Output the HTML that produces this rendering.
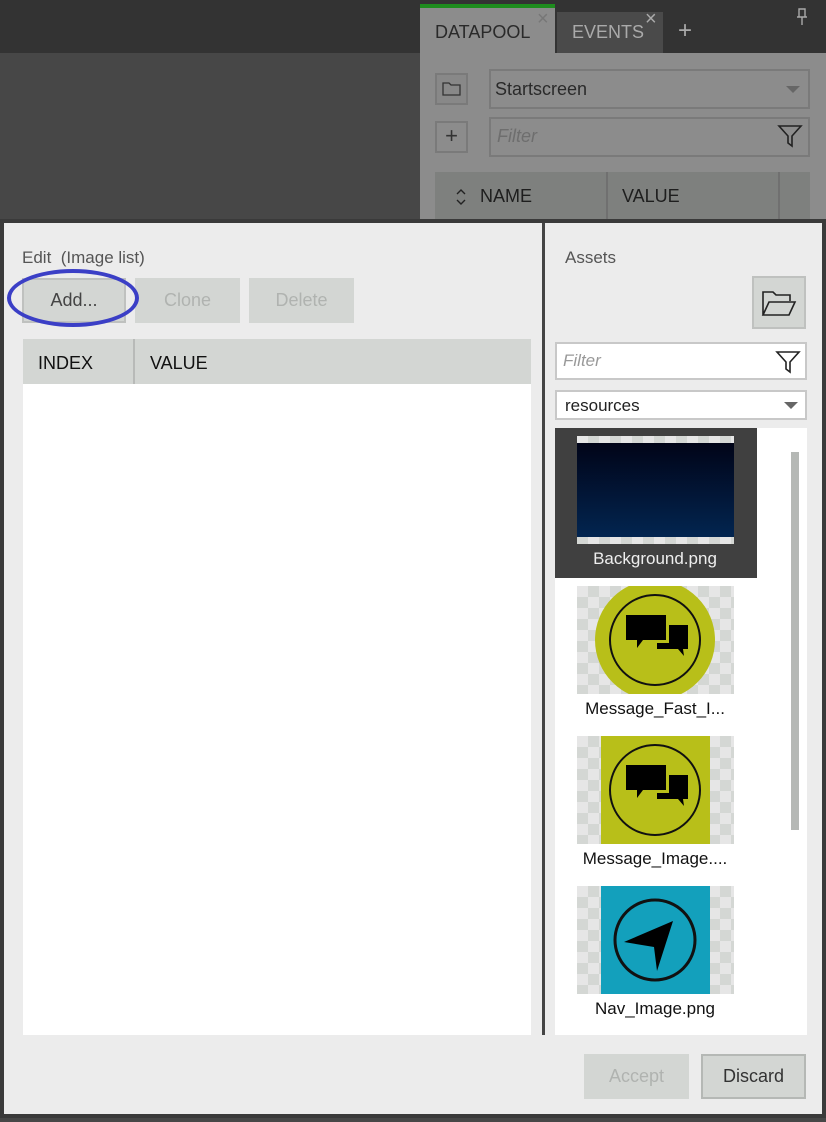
<!DOCTYPE html>
<html><head><meta charset="utf-8"><style>
*{box-sizing:border-box;margin:0;padding:0}
body{width:826px;height:1122px;position:relative;overflow:hidden;background:#474747;font-family:"Liberation Sans",sans-serif;}
.a{position:absolute}
.t{font-size:17px;color:#222}
.btn{position:absolute;background:#d3d6d3;font-size:18px;text-align:center;color:#b0b3b0}
.chk{background-color:#e6e6e6;background-image:linear-gradient(45deg,#d4d7d4 25%,transparent 25%,transparent 75%,#d4d7d4 75%),linear-gradient(45deg,#d4d7d4 25%,transparent 25%,transparent 75%,#d4d7d4 75%);background-size:22px 22px;background-position:0 0,11px 11px}
.lbl{position:absolute;width:200px;text-align:center;font-size:17px;color:#111}
</style></head><body>
<div class="a" style="left:0;top:0;width:826px;height:53px;background:#333"></div>
<div class="a" style="left:420px;top:0;width:406px;height:220px;background:#8c8c8c"></div>
<div class="a" style="left:420px;top:0;width:406px;height:53px;background:#333"></div>
<div class="a" style="left:420px;top:4px;width:135px;height:4px;background:#1e8c1e"></div>
<div class="a" style="left:420px;top:8px;width:135px;height:45px;background:#8c8c8c"></div>
<div class="a" style="left:557px;top:12px;width:106px;height:41px;background:#4a4a4a"></div>
<div class="a" style="left:435px;top:22px;font-size:18px;color:#2a2a2a">DATAPOOL</div>
<div class="a" style="left:537px;top:8px;font-size:20px;color:#777">×</div>
<div class="a" style="left:572px;top:22px;font-size:18px;color:#aaa">EVENTS</div>
<div class="a" style="left:645px;top:8px;font-size:20px;color:#aaa">×</div>
<div class="a" style="left:678px;top:17px;font-size:24px;color:#aaa">+</div>
<svg class="a" style="left:795px;top:8px" width="14" height="18" viewBox="0 0 14 18"><path d="M4 1h6v8H4zM2 9h10M7 9v8" fill="none" stroke="#aaa" stroke-width="1.4"/></svg>
<div class="a" style="left:435px;top:73px;width:33px;height:32px;border:2px solid #7a7a7a;background:#888"></div>
<svg class="a" style="left:441px;top:80px" width="22" height="18" viewBox="0 0 22 18"><path d="M2 3h6l2 2h9v10H2z" fill="none" stroke="#333" stroke-width="1.3"/></svg>
<div class="a" style="left:489px;top:69px;width:321px;height:40px;border:2px solid #7a7a7a"></div>
<div class="a" style="left:495px;top:79px;font-size:18px;color:#2a2a2a">Startscreen</div>
<div class="a" style="left:786px;top:86px;border-left:7px solid transparent;border-right:7px solid transparent;border-top:7px solid #666"></div>
<div class="a" style="left:435px;top:121px;width:33px;height:32px;border:2px solid #7a7a7a;font-size:22px;text-align:center;line-height:26px;color:#333">+</div>
<div class="a" style="left:489px;top:117px;width:321px;height:40px;border:2px solid #7a7a7a"></div>
<div class="a" style="left:497px;top:126px;font-size:18px;font-style:italic;color:#6e6e6e">Filter</div>
<div class="a" style="left:435px;top:172px;width:375px;height:48px;background:#7e807e"></div>
<div class="a" style="left:606px;top:172px;width:2px;height:48px;background:#707070"></div>
<div class="a" style="left:778px;top:172px;width:2px;height:48px;background:#707070"></div>
<svg class="a" style="left:455px;top:187px" width="12" height="20" viewBox="0 0 12 20"><path d="M2 7l4-4 4 4M2 13l4 4 4-4" fill="none" stroke="#222" stroke-width="1.4"/></svg>
<div class="a" style="left:480px;top:186px;font-size:18px;color:#1e1e1e">NAME</div>
<div class="a" style="left:622px;top:186px;font-size:18px;color:#1e1e1e">VALUE</div>

<div class="a" style="left:0;top:219px;width:826px;height:899px;background:#3a3a3a"></div>
<div class="a" style="left:4px;top:223px;width:818px;height:891px;background:#ececec"></div>
<div class="a t" style="left:22px;top:248px;color:#555">Edit &nbsp;(Image list)</div>
<div class="btn" style="left:22px;top:278px;width:104px;height:45px;border:2px solid #bfc1bf;color:#444;line-height:41px">Add...</div>
<div class="btn" style="left:135px;top:278px;width:105px;height:45px;line-height:45px">Clone</div>
<div class="btn" style="left:249px;top:278px;width:105px;height:45px;line-height:45px">Delete</div>
<div class="a" style="left:7px;top:269px;width:132px;height:58px;border:4px solid #3b3fc6;border-radius:50%"></div>
<div class="a" style="left:23px;top:339px;width:508px;height:696px;background:#fff"></div>
<div class="a" style="left:23px;top:339px;width:508px;height:45px;background:#d3d6d3"></div>
<div class="a" style="left:133px;top:339px;width:2px;height:45px;background:#b8bab8"></div>
<div class="a" style="left:38px;top:353px;font-size:18px;color:#111">INDEX</div>
<div class="a" style="left:150px;top:353px;font-size:18px;color:#111">VALUE</div>
<div class="a" style="left:542px;top:223px;width:3px;height:812px;background:#444"></div>

<div class="a t" style="left:565px;top:248px;color:#555">Assets</div>
<div class="a" style="left:752px;top:276px;width:54px;height:53px;background:#d3d6d3;border:2px solid #bfc1bf"></div>
<svg class="a" style="left:761px;top:289px" width="36" height="28" viewBox="0 0 36 28"><path d="M2 26V3h10l3 3h14v6M2 26l6-13h26l-6 13z" fill="none" stroke="#222" stroke-width="1.6"/></svg>
<div class="a" style="left:555px;top:342px;width:252px;height:38px;background:#fff;border:2px solid #c8c8c8"></div>
<div class="a" style="left:563px;top:351px;font-size:17px;font-style:italic;color:#999">Filter</div>
<svg class="a" style="left:775px;top:350px" width="26" height="24" viewBox="0 0 26 24"><path d="M2 2h22l-9 10v10l-4-3v-7z" fill="none" stroke="#222" stroke-width="1.6"/></svg>
<svg class="a" style="left:777px;top:124px" width="26" height="24" viewBox="0 0 26 24"><path d="M2 2h22l-9 10v10l-4-3v-7z" fill="none" stroke="#222" stroke-width="1.6"/></svg>
<div class="a" style="left:555px;top:390px;width:252px;height:30px;background:#fff;border:2px solid #c8c8c8"></div>
<div class="a" style="left:565px;top:396px;font-size:17px;color:#222">resources</div>
<div class="a" style="left:784px;top:402px;border-left:7px solid transparent;border-right:7px solid transparent;border-top:7px solid #666"></div>
<div class="a" style="left:555px;top:428px;width:252px;height:607px;background:#fff"></div>
<div class="a" style="left:791px;top:452px;width:8px;height:378px;background:#b5b8b5"></div>

<div class="a" style="left:555px;top:428px;width:202px;height:150px;background:#404040"></div>
<div class="a chk" style="left:577px;top:436px;width:157px;height:108px"></div>
<div class="a" style="left:577px;top:443px;width:157px;height:94px;background:linear-gradient(#010418,#022550)"></div>
<div class="lbl" style="left:555px;top:549px;color:#eee">Background.png</div>

<div class="a chk" style="left:577px;top:586px;width:157px;height:108px"></div>
<svg class="a" style="left:577px;top:586px" width="157" height="108"><circle cx="78" cy="54" r="60" fill="#b8bf19"/><circle cx="78" cy="54" r="45" fill="none" stroke="#111" stroke-width="2"/><path d="M49 29h40v25H66l-6 8v-8H49z" fill="#000"/><path d="M92 39h19v24h-5l1 7-6-7H80v-6h12z" fill="#000"/></svg>
<div class="lbl" style="left:555px;top:699px">Message_Fast_I...</div>

<div class="a chk" style="left:577px;top:736px;width:157px;height:108px"></div>
<svg class="a" style="left:577px;top:736px" width="157" height="108"><rect x="24" y="0" width="109" height="108" fill="#b8bf19"/><circle cx="78" cy="54" r="45" fill="none" stroke="#111" stroke-width="2"/><path d="M49 29h40v25H66l-6 8v-8H49z" fill="#000"/><path d="M92 39h19v24h-5l1 7-6-7H80v-6h12z" fill="#000"/></svg>
<div class="lbl" style="left:555px;top:849px">Message_Image....</div>

<div class="a chk" style="left:577px;top:886px;width:157px;height:108px"></div>
<svg class="a" style="left:577px;top:886px" width="157" height="108"><rect x="24" y="0" width="109" height="108" fill="#13a0bc"/><circle cx="78" cy="54" r="40" fill="none" stroke="#111" stroke-width="3"/><path d="M96 35L47 56l30 5 3 24z" fill="#000"/></svg>
<div class="lbl" style="left:555px;top:999px">Nav_Image.png</div>

<div class="btn" style="left:584px;top:1054px;width:105px;height:45px;line-height:45px">Accept</div>
<div class="btn" style="left:701px;top:1054px;width:105px;height:45px;border:2px solid #b5b8b5;color:#333;line-height:41px">Discard</div>
</body></html>
